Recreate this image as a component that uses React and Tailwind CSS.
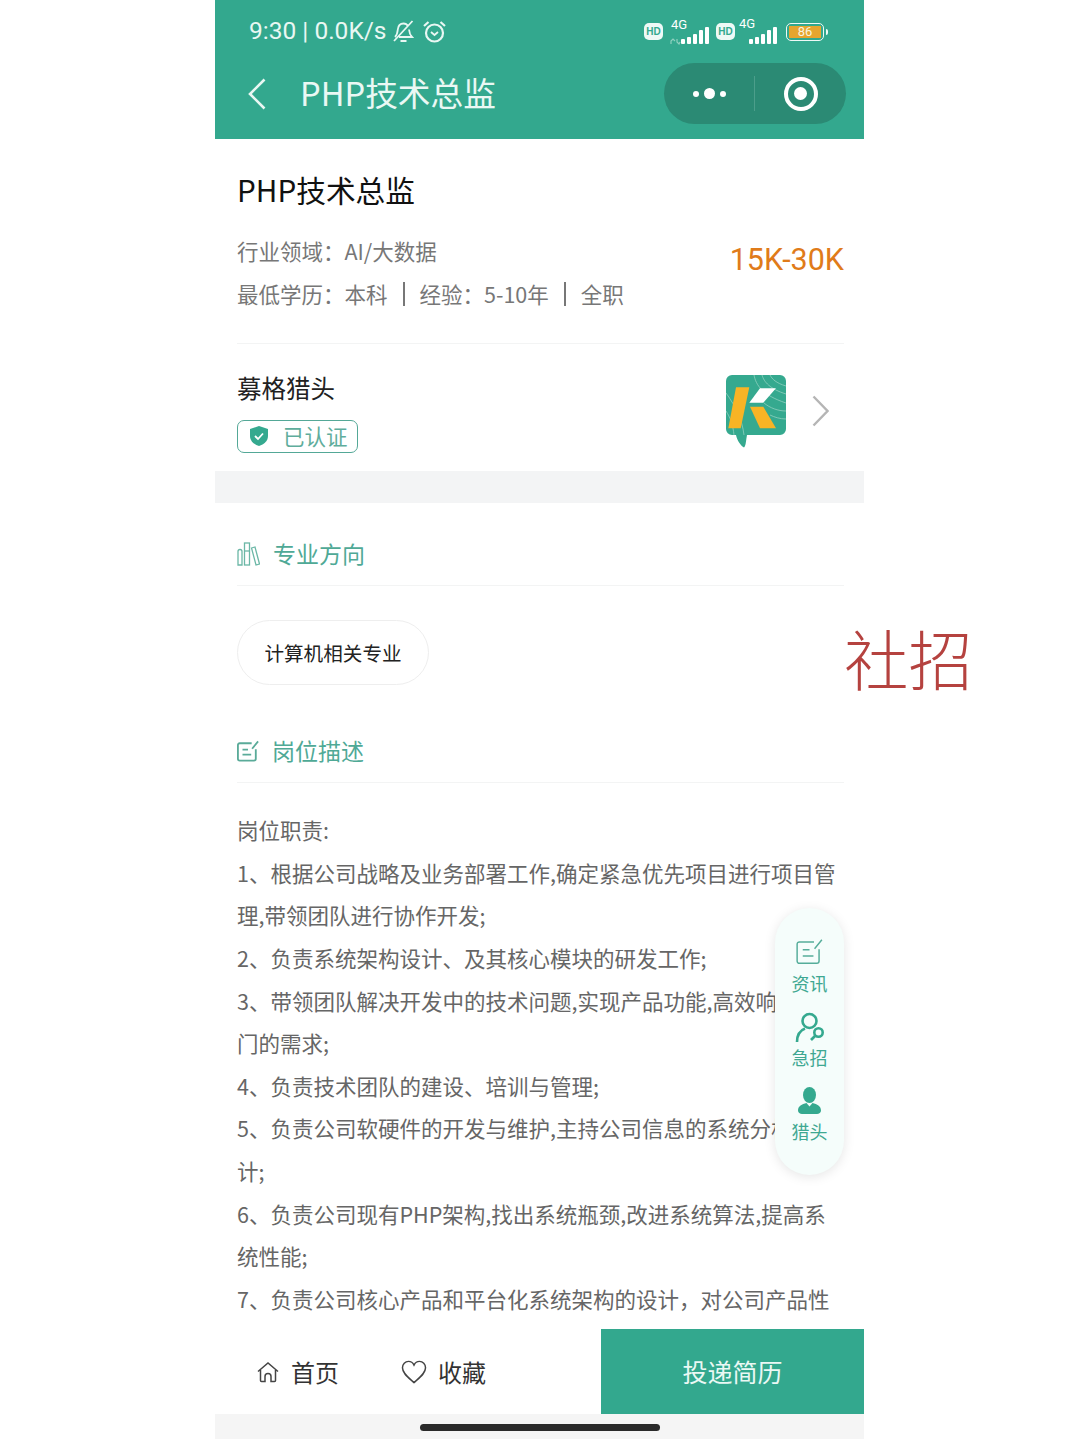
import React from 'react'

const duties = [
    '岗位职责:',
    '1、根据公司战略及业务部署工作,确定紧急优先项目进行项目管',
    '理,带领团队进行协作开发;',
    '2、负责系统架构设计、及其核心模块的研发工作;',
    '3、带领团队解决开发中的技术问题,实现产品功能,高效响应各部',
    '门的需求;',
    '4、负责技术团队的建设、培训与管理;',
    '5、负责公司软硬件的开发与维护,主持公司信息的系统分析与设',
    '计;',
    '6、负责公司现有PHP架构,找出系统瓶颈,改进系统算法,提高系',
    '统性能;',
    '7、负责公司核心产品和平台化系统架构的设计，对公司产品性',
]

function Signal({ className, arrows }) {
    return (
        <svg width="39" height="21" viewBox="0 0 39 21" className={className}>
            {arrows && <path d="M1 20v-3l2-2 2 2M7 15v3l2 2 1-2" fill="none" stroke="#8fd0bf" strokeWidth="1.200" />}
            <rect x="11" y="15" width="4" height="5" rx="1" fill="#fff" />
            <rect x="17" y="13" width="4" height="7" rx="1" fill="#fff" />
            <rect x="23" y="10" width="4" height="10" rx="1" fill="#fff" />
            <rect x="29" y="6" width="4" height="14" rx="1" fill="#fff" />
            <rect x="35" y="3" width="4" height="17" rx="1" fill="#fff" />
        </svg>
    )
}

function HdBadge() {
    return (
        <div className="flex h-[17px] w-[19px] items-center justify-center rounded-[5px] bg-[#eef9f6] font-['Liberation_Sans',sans-serif] text-[10px] leading-none font-bold text-[#34a98f]">
            HD
        </div>
    )
}

function StatusBar() {
    return (
        <div className="flex h-[62px] items-center justify-between pt-[1px] pr-[36px] pl-[34px] text-[#e9f7f3]">
            <div className="flex items-center">
                <span className="font-['Roboto',sans-serif] text-[24.5px] leading-none">9:30 | 0.0K/s</span>
                <svg width="22" height="25" viewBox="0 0 22 25" fill="none" stroke="#e9f7f3" strokeWidth="1.800" className="ml-[5px]">
                    <path d="M3 18c2-2 2.500-4 2.800-7.500C6.200 6.500 8.500 4.500 11.500 4.500c2 0 3.500.8 4.500 2.500M17 10.500c.3 3 1 5.500 3 7.500H7M8.500 22h6M20.500 2 2 22" />
                </svg>
                <svg width="25" height="25" viewBox="0 0 25 25" fill="none" stroke="#e9f7f3" strokeWidth="2.200" className="ml-[8px]">
                    <circle cx="12.500" cy="14" r="8.500" />
                    <path d="M2 7 6.500 3M23 7l-4.500-4" />
                    <path d="m9 13 3.500 3 3.500-3" strokeWidth="1.800" />
                </svg>
            </div>
            <div className="flex items-center">
                <HdBadge />
                <div className="relative ml-[8px] h-[24px] w-[38px]">
                    <span className="absolute top-[-2px] left-0 font-['Roboto',sans-serif] text-[13px] leading-none text-white">4G</span>
                    <Signal arrows className="absolute right-0 bottom-[-1px]" />
                </div>
                <div className="ml-[7px]"><HdBadge /></div>
                <div className="relative ml-[4px] h-[24px] w-[38px]">
                    <span className="absolute top-[-3px] left-0 font-['Roboto',sans-serif] text-[13px] leading-none text-white">4G</span>
                    <Signal className="absolute right-0 bottom-[-1px]" />
                </div>
                <div className="ml-[9px] flex h-[18px] w-[38px] items-center justify-center rounded-[5px] border-[1.5px] border-[#eef9f6] p-[2px]">
                    <div className="flex h-full w-full items-center justify-center bg-[#e6a52f] font-['Roboto',sans-serif] text-[13px] leading-none text-[#f8f3df]">86</div>
                </div>
                <div className="ml-[2px] h-[6px] w-[2px] rounded-r-sm bg-[#eef9f6]" />
            </div>
        </div>
    )
}

function NavBar() {
    return (
        <div className="flex h-[77px] items-start pl-[33px]">
            <svg width="18" height="32" viewBox="0 0 18 32" fill="none" stroke="#e9f7f3" strokeWidth="2.600" className="mt-[16px]">
                <path d="M16.500 1.500 2 16l14.500 14.500" />
            </svg>
            <div className="mt-[9px] ml-[34px] text-[32.700px] leading-[42px] text-[#eaf8f4]">PHP技术总监</div>
            <div className="mt-[1px] mr-[18px] ml-auto flex h-[61px] w-[182px] items-center rounded-full bg-[#2b8a74]">
                <div className="flex w-[90px] items-center justify-center gap-[5px]">
                    <span className="h-[6px] w-[6px] rounded-full bg-white" />
                    <span className="h-[11px] w-[11px] rounded-full bg-white" />
                    <span className="h-[6px] w-[6px] rounded-full bg-white" />
                </div>
                <div className="h-[35px] w-px bg-[#4c9e8b]" />
                <div className="flex flex-1 justify-center">
                    <div className="flex h-[34px] w-[34px] items-center justify-center rounded-full border-[4px] border-white">
                        <span className="h-[13px] w-[13px] rounded-full bg-white" />
                    </div>
                </div>
            </div>
        </div>
    )
}

function CompanyLogo() {
    return (
        <svg width="60" height="73" viewBox="0 0 60 73">
            <path d="M6 0h48a6 6 0 0 1 6 6v48a6 6 0 0 1-6 6H21c-1 5-1 11-3 12.500-3-1.500-7-7-8-12.500H6a6 6 0 0 1-6-6V6a6 6 0 0 1 6-6Z" fill="#35a98f" />
            <g fill="none" stroke="#8fd0bf" strokeWidth="0.800">
                <path d="M28 0c2 10 8 20 32 28" />
                <path d="M36 0c2 7 8 14 24 19" />
                <path d="M44 0c2 4 6 8 16 11" />
                <path d="M0 18c10 14 16 26 18 42" />
                <path d="M38 28c6 5 14 8 22 8" />
                <path d="M44 40c4 2 10 4 16 4" />
                <path d="M0 36c4 6 7 14 8 24" />
            </g>
            <path d="M10 12.300h13.300L14.700 53.300H2.300Z" fill="#f8b425" />
            <path d="M34 13.300h16L37.300 27.700h-14Z" fill="#fff" />
            <path d="M24 31.700h13.300L50 53.300H34Z" fill="#f8b425" />
        </svg>
    )
}

function SectionTitle({ icon, children }) {
    return (
        <div className="flex h-[51px] items-center gap-[13px] border-b border-[#f3f4f4] pb-[13px] text-[23px] leading-none text-[#4fa996]">
            {icon}
            <span>{children}</span>
        </div>
    )
}

function BooksIcon() {
    return (
        <svg width="23" height="24" viewBox="0 0 23 24" fill="none" stroke="#6bb7a6" strokeWidth="1.300">
            <path d="M1 23V9.500a2 2 0 0 1 4 0V23Z" />
            <rect x="7.500" y="1" width="5" height="22" />
            <path d="M7.500 9h5" />
            <path d="m14.500 6 3.500-1 4.500 17-3.500 1Z" />
        </svg>
    )
}

function NoteIcon({ size = 22, color = '#5aab99', width = 2 }) {
    return (
        <svg width={size} height={size} viewBox="0 0 24 24" fill="none" stroke={color} strokeWidth={width}>
            <path d="M20.500 10v10.500a2 2 0 0 1-2 2H3a2 2 0 0 1-2-2V5.500a2 2 0 0 1 2-2h13" />
            <path d="M6 10.500h6M6 16h9.500M16.500 9.500 23 1.500" />
        </svg>
    )
}

function SideItem({ icon, label }) {
    return (
        <div className="flex h-[74px] flex-col items-center">
            <div className="flex h-[36px] items-center">{icon}</div>
            <div className="mt-[2px] text-[18px] leading-[24px] text-[#3fa892]">{label}</div>
        </div>
    )
}

function SidePanel() {
    return (
        <div className="absolute top-[908px] left-[775px] flex h-[267px] w-[69px] flex-col items-center rounded-[35px] bg-[#f5fdfb] pt-[25px] shadow-[0_2px_12px_rgba(0,0,0,0.1)]">
            <SideItem icon={<NoteIcon size={27} color="#55ad9a" width={1.300} />} label="资讯" />
            <SideItem
                icon={
                    <svg width="30" height="31" viewBox="0 0 30 31" fill="none" stroke="#35a98f" strokeWidth="2.600" className="mt-[4px]">
                        <circle cx="14.500" cy="9" r="7" />
                        <path d="M2 30c0-7 3-11.500 8-13.500" />
                        <circle cx="23.500" cy="20.500" r="4.200" />
                        <path d="m20 24-4 4" />
                    </svg>
                }
                label="急招"
            />
            <SideItem
                icon={
                    <svg width="23" height="27" viewBox="0 0 23 27" fill="#35a98f" className="mt-[2px]">
                        <ellipse cx="11.500" cy="8" rx="6.500" ry="8" />
                        <path d="M0 23.500c0-4.500 4-6.500 8.500-7.500l3 3.500 3-3.500c4.500 1 8.500 3 8.500 7.500 0 2-2 3.500-4 3.500H4c-2 0-4-1.500-4-3.500Z" />
                    </svg>
                }
                label="猎头"
            />
        </div>
    )
}

function Footer() {
    return (
        <div className="relative z-10 shrink-0 bg-white">
            <div className="flex h-[85px] text-[24px] leading-none text-[#333]">
                <div className="flex w-[386px] items-center pl-[41px]">
                    <svg width="24" height="24" viewBox="0 0 24 24" fill="none" stroke="#444" strokeWidth="1.500">
                        <path d="M2 11.500 12 3l10 8.500M4.500 10v10.500a1 1 0 0 0 1 1h3.500v-5a3 3 0 0 1 6 0v5h3.500a1 1 0 0 0 1-1V10" />
                    </svg>
                    <span className="ml-[11px]">首页</span>
                    <svg width="26" height="24" viewBox="0 0 28 26" fill="none" stroke="#444" strokeWidth="1.600" className="ml-[62px]">
                        <path d="M14 24.500C8 19 1.500 14.500 1.500 8.500 1.500 4.500 4.500 1.500 8 1.500c2.500 0 4.800 1.500 6 4 1.200-2.500 3.500-4 6-4 3.500 0 6.500 3 6.500 7 0 6-6.500 10.500-12.500 16Z" />
                    </svg>
                    <span className="ml-[11px]">收藏</span>
                </div>
                <div className="flex flex-1 items-center justify-center bg-[#33a88e] text-[25px] text-[#eaf8f4]">投递简历</div>
            </div>
            <div className="flex h-[25px] items-start justify-center bg-[#f5f5f5] pt-[10px]">
                <div className="h-[7px] w-[240px] rounded-full bg-[#2a2a2a]" />
            </div>
        </div>
    )
}

export default function App() {
    return (
        <div className="relative h-[1439px] w-[1080px] overflow-hidden bg-white font-['Noto_Sans_CJK_SC','Noto_Sans',sans-serif]">
            <div className="ml-[215px] flex h-full w-[649px] flex-col">
                <div className="h-[139px] shrink-0 bg-[#33a88e]">
                    <StatusBar />
                    <NavBar />
                </div>

                <div className="min-h-0 flex-1 overflow-hidden">
                    <div className="pt-[29px] pr-[20px] pl-[22px]">
                        <div className="text-[29.700px] leading-[44px] text-[#111]">PHP技术总监</div>
                        <div className="mt-[17px] flex h-[115px] justify-between border-b border-[#f3f4f4] text-[21.500px] leading-[43px] text-[#777]">
                            <div>
                                <div>行业领域：AI/大数据</div>
                                <div className="flex items-center">
                                    <span>最低学历：本科</span>
                                    <span className="mx-[15px] h-[24px] w-[2px] bg-[#777]" />
                                    <span>经验：5-10年</span>
                                    <span className="mx-[15px] h-[24px] w-[2px] bg-[#777]" />
                                    <span>全职</span>
                                </div>
                            </div>
                            <div className="mt-[9px] font-['Roboto',sans-serif] text-[30.500px] leading-[44px] text-[#e07b1a]">15K-30K</div>
                        </div>
                        <div className="flex h-[127px] items-center justify-between pt-[7px]">
                            <div>
                                <div className="text-[24.500px] leading-[36px] text-[#222]">募格猎头</div>
                                <div className="mt-[14px] flex h-[33px] w-[121px] items-center rounded-[7px] border-[1.5px] border-[#54a897] pl-[10px] text-[21.500px] text-[#5fad9c]">
                                    <svg width="22" height="22" viewBox="0 0 22 22">
                                        <path d="M11 1 20 4v7c0 5-4 8.500-9 10-5-1.500-9-5-9-10V4Z" fill="#35a98f" />
                                        <path d="m7 11 3 3 5-5.500" fill="none" stroke="#fff" strokeWidth="1.800" />
                                    </svg>
                                    <span className="ml-[13px]">已认证</span>
                                </div>
                            </div>
                            <div className="mr-[15px] flex items-center">
                                <CompanyLogo />
                                <svg width="17" height="32" viewBox="0 0 17 32" fill="none" stroke="#b5b5b5" strokeWidth="2.400" className="ml-[26px]">
                                    <path d="M1.500 1.500 15.500 16 1.500 30.500" />
                                </svg>
                            </div>
                        </div>
                    </div>

                    <div className="h-[32px] bg-[#f3f4f5]" />

                    <div className="pr-[20px] pl-[22px]">
                        <div className="mt-[32px]">
                            <SectionTitle icon={<BooksIcon />}>专业方向</SectionTitle>
                        </div>
                        <div className="mt-[34px] flex h-[65px] w-[192px] items-center justify-center rounded-full border border-[#eeeeee] text-[19.600px] text-[#222]">
                            计算机相关专业
                        </div>
                        <div className="mt-[47px]">
                            <SectionTitle icon={<NoteIcon />}>岗位描述</SectionTitle>
                        </div>
                        <div className="mt-[26px] text-[21.500px] leading-[42.640px] whitespace-nowrap text-[#666]">
                            {duties.map((line) => (
                                <div key={line}>{line}</div>
                            ))}
                        </div>
                    </div>
                </div>

                <Footer />
            </div>

            <SidePanel />
            <div className="absolute top-[612px] left-[844px] text-[64.500px] leading-[90px] font-light text-[#b5423f]">社招</div>
        </div>
    )
}
